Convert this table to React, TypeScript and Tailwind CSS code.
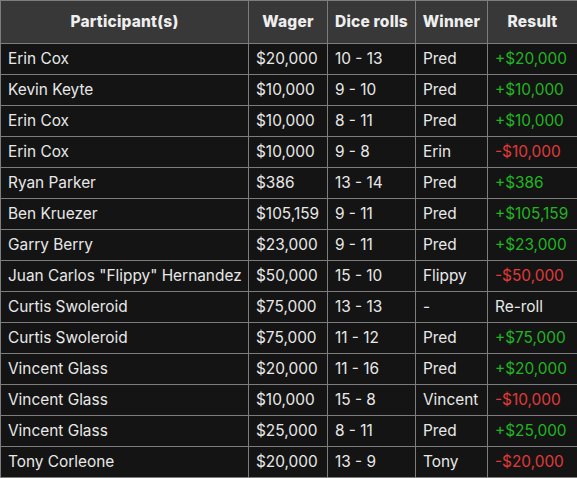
import React from 'react';

type Row = { name: string; wager: string; dice: string; winner: string; result: string };

const rows: Row[] = [
  { name: 'Erin Cox', wager: '$20,000', dice: '10 - 13', winner: 'Pred', result: '+$20,000' },
  { name: 'Kevin Keyte', wager: '$10,000', dice: '9 - 10', winner: 'Pred', result: '+$10,000' },
  { name: 'Erin Cox', wager: '$10,000', dice: '8 - 11', winner: 'Pred', result: '+$10,000' },
  { name: 'Erin Cox', wager: '$10,000', dice: '9 - 8', winner: 'Erin', result: '-$10,000' },
  { name: 'Ryan Parker', wager: '$386', dice: '13 - 14', winner: 'Pred', result: '+$386' },
  { name: 'Ben Kruezer', wager: '$105,159', dice: '9 - 11', winner: 'Pred', result: '+$105,159' },
  { name: 'Garry Berry', wager: '$23,000', dice: '9 - 11', winner: 'Pred', result: '+$23,000' },
  { name: 'Juan Carlos "Flippy" Hernandez', wager: '$50,000', dice: '15 - 10', winner: 'Flippy', result: '-$50,000' },
  { name: 'Curtis Swoleroid', wager: '$75,000', dice: '13 - 13', winner: '-', result: 'Re-roll' },
  { name: 'Curtis Swoleroid', wager: '$75,000', dice: '11 - 12', winner: 'Pred', result: '+$75,000' },
  { name: 'Vincent Glass', wager: '$20,000', dice: '11 - 16', winner: 'Pred', result: '+$20,000' },
  { name: 'Vincent Glass', wager: '$10,000', dice: '15 - 8', winner: 'Vincent', result: '-$10,000' },
  { name: 'Vincent Glass', wager: '$25,000', dice: '8 - 11', winner: 'Pred', result: '+$25,000' },
  { name: 'Tony Corleone', wager: '$20,000', dice: '13 - 9', winner: 'Tony', result: '-$20,000' },
];

const resultColor = (r: string) =>
  r.startsWith('+') ? 'text-[#22b422]' : r.startsWith('-') ? 'text-[#e03a3a]' : 'text-[#e8e8e8]';

const App = () => {
  return (
    <div className="w-[577px] h-[478px] bg-[#141414] font-['Inter',sans-serif]">
      <table className="w-[577px] table-fixed border-collapse text-[15.4px] text-[#e8e8e8]">
        <colgroup>
          <col className="w-[248px]" />
          <col className="w-[79px]" />
          <col className="w-[88px]" />
          <col className="w-[72px]" />
          <col className="w-[90px]" />
        </colgroup>
        <thead>
          <tr className="h-[43px] bg-[#383838]">
            {['Participant(s)', 'Wager', 'Dice rolls', 'Winner', 'Result'].map(h => (
              <th key={h} className="border border-[#7d7d7d] px-[4px] text-center text-[15.5px] font-extrabold tracking-[0.2px] text-[#eeeeee] whitespace-nowrap">
                {h}
              </th>
            ))}
          </tr>
        </thead>
        <tbody>
          {rows.map((r, i) => (
            <tr key={i} className="h-[31px]">
              <td className="border border-[#7d7d7d] px-[7px] whitespace-nowrap">{r.name}</td>
              <td className="border border-[#7d7d7d] px-[7px] whitespace-nowrap">{r.wager}</td>
              <td className="border border-[#7d7d7d] px-[7px] whitespace-nowrap">{r.dice}</td>
              <td className="border border-[#7d7d7d] px-[7px] whitespace-nowrap">{r.winner}</td>
              <td className={`border border-[#7d7d7d] px-[7px] whitespace-nowrap ${resultColor(r.result)}`}>{r.result}</td>
            </tr>
          ))}
        </tbody>
      </table>
    </div>
  );
};

export default App;
